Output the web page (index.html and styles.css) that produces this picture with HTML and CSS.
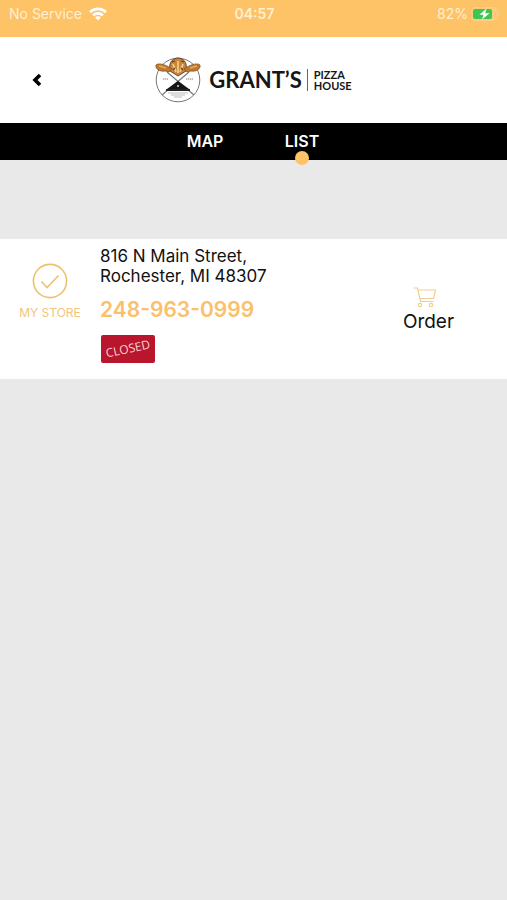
FILE: index.html
```html
<!DOCTYPE html>
<html lang="en">
<head>
  <meta charset="UTF-8">
  <meta name="viewport" content="width=device-width, initial-scale=1.0">
  <title>Grant's Pizza House</title>
  <link rel="stylesheet" href="styles.css">
</head>
<body>
  <div class="status">
    <div class="status_left">
      <span>No Service</span>
      <svg class="wifi" width="18" height="14" viewBox="0 0 18 14" fill="none" stroke="#fff" stroke-width="2.6">
        <path d="M1 5.2C5.5 0.8 12.5 0.8 17 5.2"/>
        <path d="M4 8.4C6.8 5.7 11.2 5.7 14 8.4"/>
        <path d="M9 13.4L6 10.4C7.6 9 10.4 9 12 10.4Z" fill="#fff" stroke="none"/>
      </svg>
    </div>
    <div class="time">04:57</div>
    <div class="status_right">
      <span>82%</span>
      <svg width="29" height="14" viewBox="0 0 29 14">
        <rect x="0.5" y="0.5" width="25" height="13" rx="4" fill="#fdca78" stroke="#fdd08a"/>
        <rect x="2" y="2" width="19" height="10" rx="2" fill="#3fc552"/>
        <path d="M15.5 1.5L8.5 7.8H12.5L11 12.5L18.5 6.2H14.2Z" fill="#fff"/>
        <path d="M27 5C29 6 29 8 27 9Z" fill="#fdd08a"/>
      </svg>
    </div>
  </div>

  <header class="header">
    <button class="back" aria-label="Back">
      <svg width="12" height="14" viewBox="0 0 12 14" fill="none" stroke="#000" stroke-width="3.6">
        <path d="M10 2L5 7L10 12"/>
      </svg>
    </button>
    <div class="logo">
      <svg width="46" height="48" viewBox="0 0 46 48">
        <circle cx="23" cy="24" r="21.8" fill="#fff" stroke="#777" stroke-width="1"/>
        <path d="M12 16L39 39M34 16L7 39" stroke="#777" stroke-width="1.1"/>
        <path d="M23 25L34 33H12Z" fill="#161616"/>
        <path d="M11 33H35V35H11Z" fill="#222"/>
        <path d="M13 37H33M16 39H30M19 41H27" stroke="#bbb" stroke-width="1"/>
        <path d="M22 29H24V31H22Z" fill="#aaa"/>
        <path d="M8 23H13M31 23H38" stroke="#aaa" stroke-width="1.6" stroke-dasharray="1.4 0.6"/>
        <path d="M15 15C13 5 19 2 23 2C27 2 33 5 31 15L23 20Z" fill="#c98539" stroke="#49301c" stroke-width="0.8"/>
        <path d="M18 8L21 16M23 5V17M28 8L25 16" stroke="#f4d197" stroke-width="1.6"/>
        <path d="M17 6L20 5M26 5L29 6M20 12L18 14M26 12L28 14" stroke="#6b3d17" stroke-width="1.2"/>
        <path d="M1 9C3 7 8 8 12 10L17 13L14 16L10 15C5 16 0 13 1 9Z" fill="#c1782c" stroke="#7a4a1f" stroke-width="0.7"/>
        <path d="M45 9C43 7 38 8 34 10L29 13L32 16L36 15C41 16 46 13 45 9Z" fill="#c1782c" stroke="#7a4a1f" stroke-width="0.7"/>
        <path d="M4 10L11 12M42 10L35 12" stroke="#e3aa62" stroke-width="1.6"/>
      </svg>
      <span class="logo_name">GRANT’S</span>
      <span class="logo_sub"><span>PIZZA</span><span>HOUSE</span></span>
    </div>
  </header>

  <nav class="tab_mnu">
    <a href="#none">MAP</a>
    <a href="#none" class="on">LIST</a>
  </nav>

  <main>
    <section class="store">
      <button class="my_store">
        <svg width="36" height="36" viewBox="0 0 36 36" fill="none" stroke="#eec26c" stroke-width="1.6">
          <circle cx="18" cy="18" r="16.6"/>
          <path d="M9.5 18.5L15 24.5L26.5 12.5"/>
        </svg>
        <span>MY STORE</span>
      </button>
      <div class="info">
        <p class="address">816 N Main Street,<br>Rochester, MI 48307</p>
        <a class="phone" href="tel:248-963-0999">248-963-0999</a>
        <div class="closed"><span>CLOSED</span></div>
      </div>
      <button class="order">
        <svg width="32" height="22" viewBox="0 0 32 22" fill="none" stroke="#f3cd8b" stroke-width="1.2">
          <path d="M0.5 1H4.5L7.5 14.5H20.5"/>
          <path d="M5 3H22.5L20.5 11.5H6.8"/>
          <circle cx="7" cy="18" r="1.7"/>
          <circle cx="18" cy="18" r="1.7"/>
        </svg>
        <span>Order</span>
      </button>
    </section>
  </main>
</body>
</html>
```
FILE: styles.css
```css
*{
  margin: 0;
  padding: 0;
  box-sizing: border-box;
}
body{
  background: #e9e9e9;
  color: #111;
  font-family: Inter, "Liberation Sans", sans-serif;
}
a{text-decoration: none;}
button{
  border: none;
  background: none;
  color: inherit;
  font-family: inherit;
  cursor: pointer;
}
svg{display: block;}

/* status bar */
.status{
  display: grid;
  grid-template-columns: 1fr auto 1fr;
  height: 37px;
  padding: 5px 7px 0 9px;
  background: #fec267;
  color: #fff0d2;
  font-size: 14px;
  line-height: 17px;
}
.status_left,
.status_right{
  display: flex;
  align-items: center;
  height: 17px;
  gap: 7px;
}
.status_right{
  justify-content: flex-end;
  gap: 3px;
}
.time{font-weight: 600;}

/* header */
.header{
  display: grid;
  grid-template-columns: 1fr auto 1fr;
  align-items: center;
  height: 86px;
  background: #fff;
}
.back{
  justify-self: start;
  padding: 16px 30px;
}
.logo{
  display: flex;
  align-items: center;
  color: #161616;
  font-family: Lato, "Liberation Sans", sans-serif;
  font-weight: 700;
}
.logo_name{
  padding: 0 5px 0 8px;
  font-size: 22px;
  line-height: 22px;
}
.logo_sub{
  display: flex;
  flex-direction: column;
  padding-left: 6px;
  border-left: 1px solid #666;
  font-size: 11px;
  line-height: 11px;
}

/* tab menu */
.tab_mnu{
  display: flex;
  justify-content: center;
  background: #000;
}
.tab_mnu a{
  position: relative;
  width: 97px;
  color: #fff;
  font-size: 16px;
  font-weight: 600;
  line-height: 37px;
  text-align: center;
}
.tab_mnu .on::after{
  content: "";
  position: absolute;
  left: 50%;
  bottom: -5px;
  width: 14px;
  height: 14px;
  margin-left: -7px;
  border-radius: 50%;
  background: #fec267;
}

/* store list */
.store{
  display: grid;
  grid-template-columns: 100px 1fr 157px;
  margin-top: 79px;
  padding: 7px 0 16px;
  background: #fff;
}
.my_store,
.order{
  display: flex;
  flex-direction: column;
  align-items: center;
  align-self: start;
}
.my_store{
  padding-top: 17px;
  gap: 6px;
  color: #f1c67a;
  font-size: 12px;
  line-height: 16px;
}
.address{
  font-size: 17px;
  line-height: 20px;
}
.phone{
  display: block;
  margin-top: 12px;
  color: #fbc069;
  font-size: 21px;
  font-weight: 600;
  line-height: 24px;
}
.closed{
  width: 54px;
  margin: 13px 0 0 1px;
  border-radius: 2px;
  background: #b9162d;
  color: #f8d5d3;
  font-family: "Open Sans", "Liberation Sans", sans-serif;
  font-size: 12px;
  line-height: 28px;
  text-align: center;
}
.closed span{
  display: block;
  transform: rotate(-12deg);
}
.order{
  padding-top: 41px;
  gap: 2px;
  font-size: 19px;
  line-height: 22px;
}
```
